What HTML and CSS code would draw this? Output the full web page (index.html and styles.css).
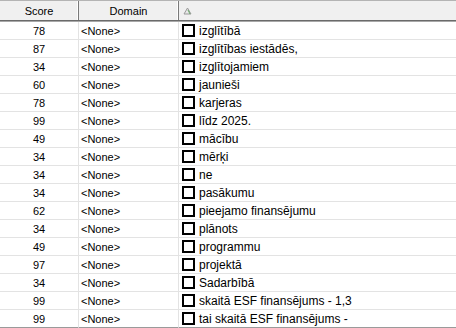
FILE: index.html
```html
<!DOCTYPE html>
<html>
<head>
<meta charset="utf-8">
<link rel="stylesheet" href="styles.css">
</head>
<body>
<div class="grid">
  <div class="head">
    <div class="hcell">Score</div>
    <div class="hcell">Domain</div>
    <div class="hcell hlast"><svg class="sort" width="9" height="8" viewBox="0 0 9 8"><path d="M4.5 1 L8 7 L1 7 Z" fill="#e8e8e8" stroke="#9a9a9a" stroke-width="1"/><path d="M5 3 L7 7" stroke="#6aa86a" stroke-width="1"/></svg></div>
  </div>
  <div class="row"><div class="c score">78</div><div class="c dom">&lt;None&gt;</div><div class="c term"><span class="box"></span>izglītībā</div></div>
  <div class="row"><div class="c score">87</div><div class="c dom">&lt;None&gt;</div><div class="c term"><span class="box"></span>izglītības iestādēs,</div></div>
  <div class="row"><div class="c score">34</div><div class="c dom">&lt;None&gt;</div><div class="c term"><span class="box"></span>izglītojamiem</div></div>
  <div class="row"><div class="c score">60</div><div class="c dom">&lt;None&gt;</div><div class="c term"><span class="box"></span>jaunieši</div></div>
  <div class="row"><div class="c score">78</div><div class="c dom">&lt;None&gt;</div><div class="c term"><span class="box"></span>karjeras</div></div>
  <div class="row"><div class="c score">99</div><div class="c dom">&lt;None&gt;</div><div class="c term"><span class="box"></span>līdz 2025.</div></div>
  <div class="row"><div class="c score">49</div><div class="c dom">&lt;None&gt;</div><div class="c term"><span class="box"></span>mācību</div></div>
  <div class="row"><div class="c score">34</div><div class="c dom">&lt;None&gt;</div><div class="c term"><span class="box"></span>mērķi</div></div>
  <div class="row"><div class="c score">34</div><div class="c dom">&lt;None&gt;</div><div class="c term"><span class="box"></span>ne</div></div>
  <div class="row"><div class="c score">34</div><div class="c dom">&lt;None&gt;</div><div class="c term"><span class="box"></span>pasākumu</div></div>
  <div class="row"><div class="c score">62</div><div class="c dom">&lt;None&gt;</div><div class="c term"><span class="box"></span>pieejamo finansējumu</div></div>
  <div class="row"><div class="c score">34</div><div class="c dom">&lt;None&gt;</div><div class="c term"><span class="box"></span>plānots</div></div>
  <div class="row"><div class="c score">49</div><div class="c dom">&lt;None&gt;</div><div class="c term"><span class="box"></span>programmu</div></div>
  <div class="row"><div class="c score">97</div><div class="c dom">&lt;None&gt;</div><div class="c term"><span class="box"></span>projektā</div></div>
  <div class="row"><div class="c score">34</div><div class="c dom">&lt;None&gt;</div><div class="c term"><span class="box"></span>Sadarbībā</div></div>
  <div class="row"><div class="c score">99</div><div class="c dom">&lt;None&gt;</div><div class="c term"><span class="box"></span>skaitā ESF finansējums - 1,3</div></div>
  <div class="row last"><div class="c score">99</div><div class="c dom">&lt;None&gt;</div><div class="c term"><span class="box"></span>tai skaitā ESF finansējums -</div></div>
</div>
</body>
</html>
```

FILE: styles.css
```css
html, body {
  margin: 0;
  padding: 0;
  background: #ffffff;
}
body {
  font-family: "Liberation Sans", Arial, sans-serif;
  font-size: 11px;
  color: #000000;
  width: 456px;
  height: 328px;
  overflow: hidden;
}
.grid {
  display: flex;
  flex-direction: column;
}
.head {
  display: grid;
  grid-template-columns: 79px 100px 1fr;
  height: 19px;
  background: #f0f0f0;
  border-top: 1px solid #b4b4b4;
  border-bottom: 1px solid #6a6a6a;
  box-shadow: 0 1px 0 #a8a8a8;
  margin-bottom: 1px;
}
.hcell {
  display: flex;
  align-items: center;
  justify-content: center;
  border-right: 1px solid #7a7a7a;
  box-shadow: inset -1px 0 0 #ffffff;
  font-size: 11px;
  color: #000;
}
.hcell.hlast {
  justify-content: flex-start;
  padding-left: 4px;
  border-right: none;
  box-shadow: none;
}
.sort {
  display: block;
  margin-top: 1px;
}
.row {
  display: grid;
  grid-template-columns: 79px 100px 1fr;
  height: 18px;
}
.c {
  height: 17px;
  border-bottom: 1px solid #e3e3e3;
  border-right: 1px solid #e3e3e3;
  display: flex;
  align-items: center;
  white-space: nowrap;
  font-size: 11px;
}
.score {
  justify-content: center;
}
.dom {
  padding-left: 2px;
}
.term {
  padding-left: 3px;
  border-right: none;
  font-size: 12px;
}
.box {
  width: 9px;
  height: 9px;
  border: 2px solid #000;
  margin-right: 4px;
  flex: none;
}
.row.last .c {
  border-bottom: 2px solid #9a9a9a;
}
```
